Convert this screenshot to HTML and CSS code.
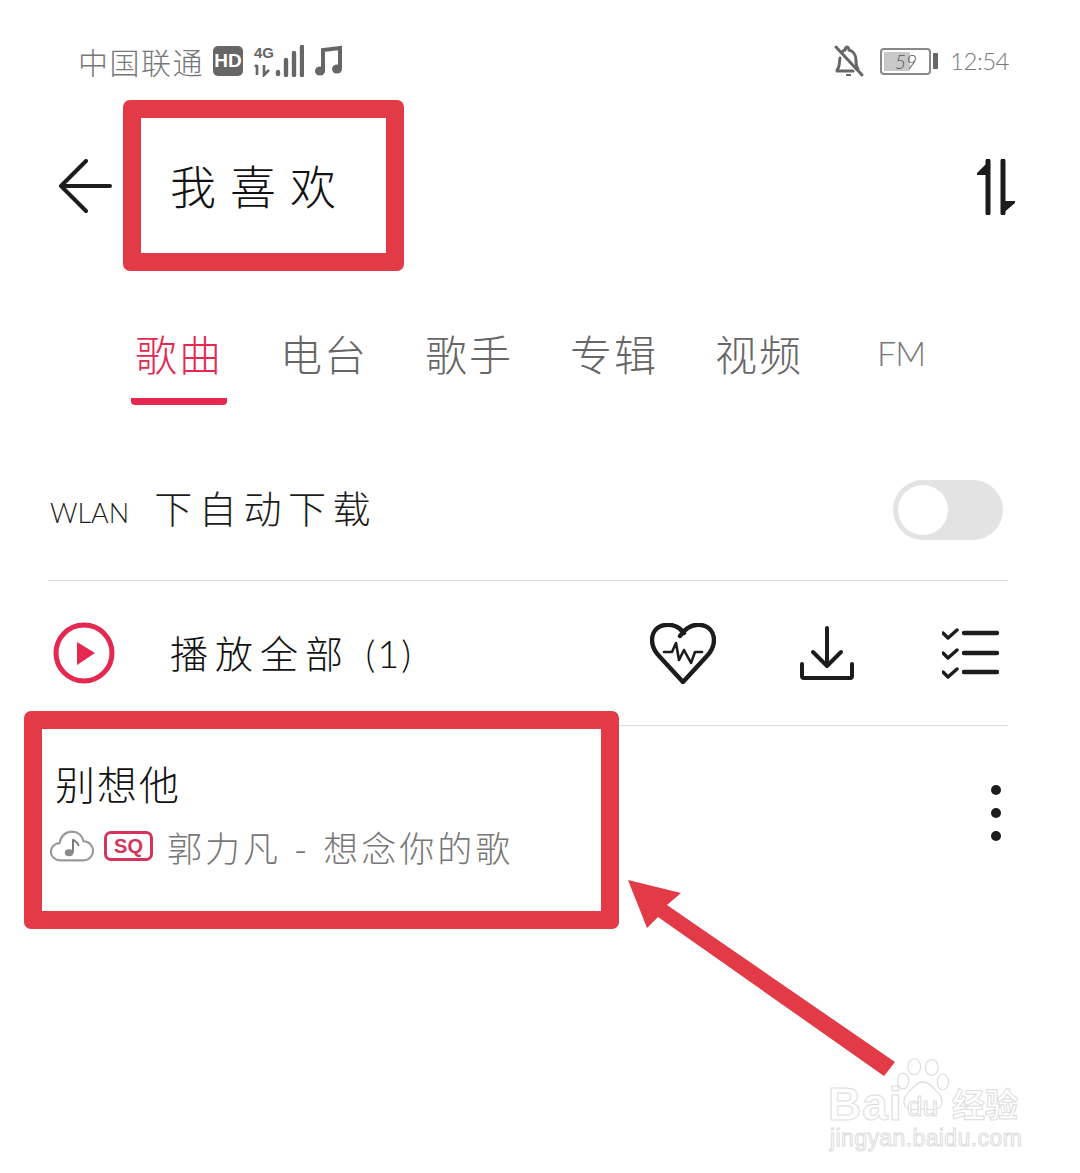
FILE: index.html
```html
<!DOCTYPE html>
<html lang="zh">
<head>
<meta charset="utf-8">
<title>我喜欢</title>
<link rel="stylesheet" href="styles.css">
</head>
<body>
<div class="page">
  <div class="status">
    <span class="carrier">中国联通</span>
    <span class="hd">HD</span>
    <span class="net">
      <span class="net-text">4G</span>
      <svg class="signal" width="50" height="32" viewBox="0 0 50 32"><path d="M3 20v10M1 22l2-2M10 20v10l5-5" stroke="#666" stroke-width="2.6" fill="none"/><path d="M24 27v2M32 15v15M40 8v22M48 2v28" stroke="#666" stroke-width="4.4" stroke-linecap="round" fill="none"/></svg>
    </span>
    <svg class="note" width="30" height="32" viewBox="0 0 30 32"><path d="M9 26V5L26 3v20" fill="none" stroke="#666" stroke-width="4"/><ellipse cx="6" cy="26" rx="5" ry="4.5" fill="#666"/><ellipse cx="23" cy="24" rx="5" ry="4.5" fill="#666"/></svg>
    <span class="status-right">
      <svg class="bell" width="30" height="32" viewBox="0 0 30 32"><path d="M2 2l26 28" stroke="#666" stroke-width="3" stroke-linecap="round"/><path d="M3 26h16M24 24c-2-2-2-5-2-9 0-5-3-9-7-10-1-4-3-4-4 0-1 0-2 1-3 2M6 13c-1 5 0 9-3 12" fill="none" stroke="#666" stroke-width="3" stroke-linecap="round"/><path d="M12 30h5" stroke="#666" stroke-width="2"/></svg>
      <span class="battery"><span class="battery-fill"></span><span class="battery-num">59</span></span>
      <span class="battery-tip"></span>
      <span class="time">12:54</span>
    </span>
  </div>

  <header class="header">
    <svg class="back" width="54" height="56" viewBox="0 0 54 56"><path d="M52 27H3M28 2L3 27l25 25" fill="none" stroke="#1c1c1c" stroke-width="4" stroke-linecap="round" stroke-linejoin="round"/></svg>
    <h1 class="title">我喜欢</h1>
    <svg class="sort" width="42" height="56" viewBox="0 0 42 56"><path d="M13 2v52M28 2v52" stroke="#1c1c1c" stroke-width="5" stroke-linecap="round" fill="none"/><path d="M14 2L2 14v2h12zM27 42h13v2L27 55z" fill="#1c1c1c"/></svg>
  </header>

  <nav class="tabs">
    <span class="tab tab-active">歌曲</span>
    <span class="tab">电台</span>
    <span class="tab">歌手</span>
    <span class="tab">专辑</span>
    <span class="tab">视频</span>
    <span class="tab tab-fm">FM</span>
  </nav>

  <div class="row row-wlan">
    <span class="wlan-text"><span class="latin wlan-latin">WLAN</span> 下自动下载</span>
    <span class="toggle"><span class="knob"></span></span>
  </div>

  <div class="row row-play">
    <svg class="play" width="62" height="62" viewBox="0 0 62 62"><circle cx="31" cy="31" r="28" fill="none" stroke="#e4284f" stroke-width="5"/><path d="M24 20l18 11-18 12z" fill="#e4284f"/></svg>
    <span class="play-text">播放全部 <span class="latin play-count">(1)</span></span>
    <svg class="heart" width="66" height="61" viewBox="0 0 66 61"><path d="M34 10C29 3 21 1 15 2 7 3 2 9 2 17c0 7 3 12 8 17l23 25 23-25c5-5 8-10 8-17 0-8-5-14-13-15-6-1-14 1-21 11" fill="none" stroke="#1c1c1c" stroke-width="4.4" stroke-linejoin="round" stroke-linecap="round"/><path d="M14 29h8l4-9 3 17 5-10 7 13 4-11h7" fill="none" stroke="#1c1c1c" stroke-width="2.6" stroke-linejoin="round" stroke-linecap="round"/></svg>
    <svg class="download" width="54" height="54" viewBox="0 0 54 54"><path d="M27 2v38M13 26l14 14 14-14M2 38v12q0 2 2 2h46q2 0 2-2V38" fill="none" stroke="#1c1c1c" stroke-width="4" stroke-linecap="round" stroke-linejoin="round"/></svg>
    <svg class="checks" width="58" height="52" viewBox="0 0 58 52"><path d="M1 6l5 5 9-8M1 26l5 5 9-8M1 45l5 5 9-8" fill="none" stroke="#1c1c1c" stroke-width="3.4" stroke-linecap="round" stroke-linejoin="round"/><path d="M22 6h33M22 26h33M22 45h33" stroke="#1c1c1c" stroke-width="4.4" stroke-linecap="round"/></svg>
  </div>

  <div class="song">
    <div class="song-info">
      <div class="song-title">别想他</div>
      <div class="song-sub">
        <svg class="cloud" width="44" height="34" viewBox="0 0 46 34"><path d="M11 32C5 32 1 28 1 23s4-9 9-9c1-7 6-12 13-12 6 0 11 4 12 10 6 0 10 5 10 10s-4 10-10 10z" fill="none" stroke="#999" stroke-width="2.2"/><path d="M24 10v14" stroke="#777" stroke-width="2"/><path d="M24 10c2 3 6 3 6 7" stroke="#777" stroke-width="2" fill="none"/><ellipse cx="20" cy="24" rx="4.5" ry="3.6" fill="#888"/></svg>
        <span class="sq">SQ</span>
        <span class="sub-text">郭力凡 - 想念你的歌</span>
      </div>
    </div>
    <span class="more"><i></i><i></i><i></i></span>
  </div>
</div>

<div class="mark mark-title"></div>
<div class="mark mark-song"></div>
<svg class="arrow" width="1080" height="1173" viewBox="0 0 1080 1173"><path d="M628 880L681 893 667 905 895 1062 884 1076 658 917 647 928z" fill="#e33a48"/></svg>

<div class="watermark">
  <svg class="paw" width="58" height="62" viewBox="0 0 70 78"><g fill="#fff" stroke="#dcdcdc" stroke-width="1.4"><ellipse cx="24" cy="11" rx="8" ry="10"/><ellipse cx="46" cy="12" rx="8" ry="10"/><ellipse cx="10" cy="29" rx="7" ry="10"/><ellipse cx="60" cy="30" rx="7" ry="10"/><path d="M35 30c-8 0-12 7-18 13-7 6-8 15-2 20 6 4 13 1 20 1s14 3 20-1c6-5 5-14-2-20-6-6-10-13-18-13z"/></g></svg>
  <span class="wm-bai">Bai</span>
  <span class="wm-du">du</span>
  <span class="wm-jy">经验</span>
  <span class="wm-url">jingyan.baidu.com</span>
</div>
</body>
</html>
```
FILE: styles.css
```css
* { box-sizing: border-box; }
html, body { margin: 0; padding: 0; background: #fff; }
body { width: 1080px; height: 1173px; overflow: hidden; position: relative; font-family: "Noto Sans CJK SC", "Noto Sans", sans-serif; color: #1c1c1c; }
.page { display: flex; flex-direction: column; width: 1080px; }
.latin { font-family: Lato, "Open Sans", sans-serif; font-weight: 300; }

.status { display: flex; align-items: center; height: 42px; margin-top: 40px; padding: 0 71px 0 78px; color: #777; }
.carrier { font-size: 30px; font-weight: 300; line-height: 42px; letter-spacing: 1.5px; width: 135px; white-space: nowrap; }
.hd { width: 30px; height: 30px; border-radius: 5px; background: #666; color: #fff; font: 700 19px/30px "Liberation Sans", sans-serif; text-align: center; }
.net { position: relative; width: 50px; height: 32px; margin-left: 11px; }
.net-text { position: absolute; left: 0; top: 0; font: 700 15px/15px "Liberation Sans", sans-serif; color: #666; }
.signal { display: block; }
.note { margin-left: 10px; }
.status-right { display: flex; align-items: center; margin-left: auto; }
.bell { margin-right: 16px; }
.battery { position: relative; display: block; width: 51px; height: 27px; border: 2px solid #888; border-radius: 4px; }
.battery-fill { position: absolute; left: 2px; top: 2px; bottom: 2px; width: 26px; background: #c8c8c8; }
.battery-num { position: absolute; left: 13px; top: 0; font: italic 300 19px/23px Lato, sans-serif; color: #555; }
.battery-tip { width: 5px; height: 16px; margin-left: 2px; background: #666; border-radius: 1px; }
.time { margin-left: 12px; font: 300 24px/42px Lato, sans-serif; color: #777; letter-spacing: -0.5px; }

.header { display: flex; align-items: center; height: 210px; padding: 0 63px 0 58px; }
.back { display: block; }
.title { margin: 0 0 6px 58px; font-size: 46px; font-weight: 300; line-height: 60px; letter-spacing: 14px; color: #111; }
.sort { margin-left: auto; }

.tabs { display: flex; gap: 49px; margin: 28px 0 35px; padding-left: 131px; align-items: flex-start; }
.tab { padding: 0 4px 15px; font-size: 42px; line-height: 66px; height: 85px; letter-spacing: 2px; font-weight: 300; color: #666; }
.tab-active { color: #e4284f; border-bottom: 7px solid #e4284f; border-radius: 0 0 4px 4px; padding-bottom: 8px; height: 85px; padding-top: 0; }
.tab-fm { margin-left: 17px; font-family: Lato, sans-serif; font-size: 34px; letter-spacing: -1px; font-weight: 300; color: #777; }

.row { display: flex; align-items: center; margin: 0 72px 0 48px; border-bottom: 1px solid #dcdcdc; }
.row-wlan { height: 141px; padding-right: 5px; justify-content: space-between; }
.wlan-text { font-size: 38px; line-height: 50px; padding-left: 2px; font-weight: 300; letter-spacing: 6.6px; white-space: nowrap; }
.wlan-latin { font-size: 27px; letter-spacing: 0; margin-right: 10px; }
.toggle { display: flex; align-items: center; width: 110px; height: 60px; padding: 0 5px; border-radius: 30px; background: #e3e3e3; }
.knob { width: 50px; height: 50px; border-radius: 50%; background: #fff; }

.row-play { height: 145px; padding-left: 5px; }
.play-text { margin: 0 0 2px 55px; font-size: 38px; line-height: 50px; font-weight: 300; letter-spacing: 7px; white-space: nowrap; color: #111; }
.play-count { letter-spacing: 2px; }
.heart { margin-left: auto; }
.download { margin-left: 84px; }
.checks { margin-left: 88px; margin-right: 8px; }

.song { display: flex; justify-content: space-between; align-items: flex-start; padding: 33px 72px 0 55px; }
.song-title { font-size: 40px; line-height: 48px; letter-spacing: 2px; font-weight: 300; color: #111; }
.song-sub { display: flex; align-items: center; height: 48px; margin: 15px 0 0 -5px; }
.cloud { display: block; }
.sq { width: 49px; height: 30px; margin-left: 10px; border: 3px solid #d6335a; border-radius: 7px; color: #d6335a; font: 700 20px/24px "Liberation Sans", sans-serif; text-align: center; }
.sub-text { margin-left: 14px; padding-top: 2px; font-size: 35px; line-height: 46px; font-weight: 300; color: #777; letter-spacing: 3px; word-spacing: 3px; white-space: nowrap; }
.more { display: flex; flex-direction: column; gap: 13px; margin: 26px 7px 0 0; }
.more i { display: block; width: 10px; height: 10px; border-radius: 50%; background: #1c1c1c; }

.mark { position: absolute; border: 18px solid #e33a48; border-radius: 7px; }
.mark-title { left: 123px; top: 100px; width: 281px; height: 171px; }
.mark-song { left: 24px; top: 711px; width: 595px; height: 218px; }
.arrow { position: absolute; left: 0; top: 0; pointer-events: none; }

.watermark { position: absolute; left: 828px; top: 1058px; width: 200px; height: 100px; color: #fff; -webkit-text-stroke: 1px #dcdcdc; }
.paw { position: absolute; left: 66px; top: 0; }
.wm-bai { position: absolute; left: 0; top: 25px; font: 700 46px/42px "Liberation Sans", sans-serif; letter-spacing: 1px; }
.wm-du { position: absolute; left: 79px; top: 34px; font: 400 28px/30px "Liberation Sans", sans-serif; }
.wm-jy { position: absolute; left: 124px; top: 24px; font: 700 33px/42px "Noto Sans CJK SC", sans-serif; }
.wm-url { position: absolute; left: 2px; top: 67px; font: 400 23px/26px "Liberation Sans", sans-serif; white-space: nowrap; letter-spacing: 0.4px; }
```
